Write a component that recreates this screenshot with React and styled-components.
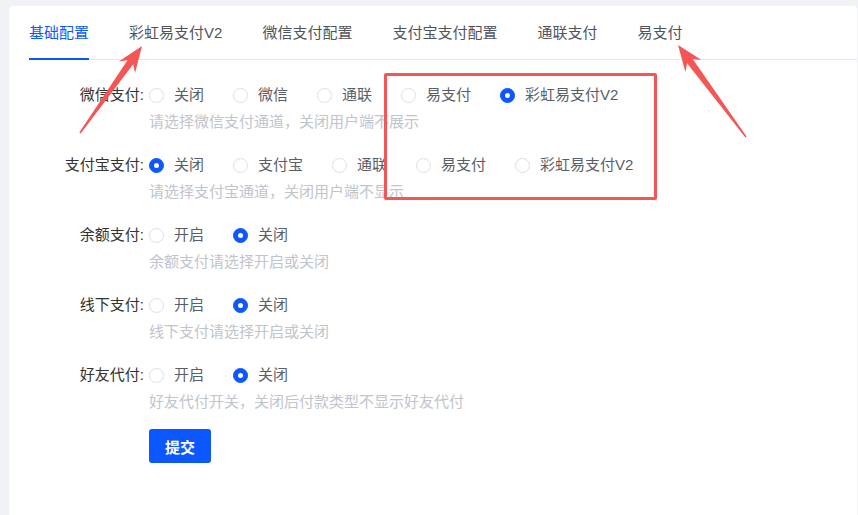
import React from "react";
import styled, { createGlobalStyle } from "styled-components";

const GlobalStyle = createGlobalStyle`
  html, body {
    margin: 0;
    padding: 0;
    background-color: #f0f2f5;
    font-family: "Liberation Sans", "Noto Sans CJK SC", sans-serif;
  }

  * {
    box-sizing: border-box;
  }
`;

const Page = styled.div`
  position: relative;
  min-height: 100vh;
  padding: 6px 1px 0 9px;
`;

const Card = styled.main`
  background-color: #fff;
  border-radius: 4px 4px 0 0;
  min-height: calc(100vh - 6px);
  padding: 16px 0 20px 20px;
`;

const TabNav = styled.nav`
  display: flex;
  gap: 40px;
  border-bottom: 1px solid #e4e7ed;
`;

const Tab = styled.div`
  position: relative;
  font-size: 15px;
  line-height: 22px;
  padding-bottom: 15px;
  color: ${(p) => (p.active ? "#0d57ff" : "#50545c")};

  &::after {
    content: "";
    display: ${(p) => (p.active ? "block" : "none")};
    position: absolute;
    left: 0;
    right: 0;
    bottom: -1px;
    height: 2px;
    background-color: #0d57ff;
  }
`;

const Form = styled.form`
  padding-top: 19px;
`;

const FormItem = styled.div`
  display: flex;
  margin-bottom: 16px;
`;

const Label = styled.label`
  flex: none;
  width: 120px;
  padding-right: 5px;
  text-align: right;
  font-size: 15px;
  line-height: 32px;
  color: #333;
`;

const Control = styled.div`
  display: flex;
  flex-direction: column;
`;

const RadioGroup = styled.div`
  display: flex;
  align-items: center;
  height: 32px;
`;

const Radio = styled.span`
  display: flex;
  align-items: center;
  margin-right: 29px;
  font-size: 15px;
  color: #5a5e66;
`;

const RadioDot = styled.span`
  position: relative;
  flex: none;
  width: 15px;
  height: 15px;
  border-radius: 50%;
  border: 1px solid ${(p) => (p.checked ? "#0d57ff" : "#dcdfe6")};
  background-color: ${(p) => (p.checked ? "#0d57ff" : "#fff")};

  &::after {
    content: "";
    display: ${(p) => (p.checked ? "block" : "none")};
    position: absolute;
    left: 50%;
    top: 50%;
    width: 5px;
    height: 5px;
    margin: -2.5px 0 0 -2.5px;
    border-radius: 50%;
    background-color: #fff;
  }
`;

const RadioText = styled.span`
  padding-left: 10px;
  line-height: 22px;
`;

const Help = styled.div`
  font-size: 15px;
  line-height: 22px;
  color: #c0c4cc;
`;

const SubmitButton = styled.button`
  margin-left: 120px;
  width: 62px;
  height: 34px;
  border: none;
  border-radius: 3px;
  background-color: #0d57ff;
  color: #fff;
  font-family: inherit;
  font-size: 15px;
  font-weight: bold;
`;

const Highlight = styled.div`
  position: absolute;
  left: 384px;
  top: 73px;
  width: 273px;
  height: 127px;
  border: 3px solid #f45656;
  border-radius: 2px;
  pointer-events: none;
`;

const Overlay = styled.svg`
  position: absolute;
  left: 0;
  top: 0;
  pointer-events: none;
`;

const tabs = ["基础配置", "彩虹易支付V2", "微信支付配置", "支付宝支付配置", "通联支付", "易支付"];

const items = [
  {
    label: "微信支付:",
    options: ["关闭", "微信", "通联", "易支付", "彩虹易支付V2"],
    value: 4,
    help: "请选择微信支付通道，关闭用户端不展示",
  },
  {
    label: "支付宝支付:",
    options: ["关闭", "支付宝", "通联", "易支付", "彩虹易支付V2"],
    value: 0,
    help: "请选择支付宝通道，关闭用户端不显示",
  },
  { label: "余额支付:", options: ["开启", "关闭"], value: 1, help: "余额支付请选择开启或关闭" },
  { label: "线下支付:", options: ["开启", "关闭"], value: 1, help: "线下支付请选择开启或关闭" },
  {
    label: "好友代付:",
    options: ["开启", "关闭"],
    value: 1,
    help: "好友代付开关，关闭后付款类型不显示好友代付",
  },
];

// tapered annotation arrow, from tail to tip
function arrowPoints(tip, tail) {
  const dx = tail[0] - tip[0];
  const dy = tail[1] - tip[1];
  const len = Math.hypot(dx, dy);
  const bx = dx / len;
  const by = dy / len;
  const nx = -by;
  const ny = bx;
  const shape = [
    [0, 0],
    [26, 10],
    [20, 3.5],
    [len, 0.8],
    [len, -0.8],
    [20, -3.5],
    [26, -10],
  ];
  return shape
    .map(([a, p]) => `${(tip[0] + a * bx + p * nx).toFixed(1)},${(tip[1] + a * by + p * ny).toFixed(1)}`)
    .join(" ");
}

function App() {
  return (
    <Page>
      <GlobalStyle />
      <Card>
        <TabNav>
          {tabs.map((t, i) => (
            <Tab key={t} active={i === 0}>
              {t}
            </Tab>
          ))}
        </TabNav>
        <Form onSubmit={(e) => e.preventDefault()}>
          {items.map((item) => (
            <FormItem key={item.label}>
              <Label>{item.label}</Label>
              <Control>
                <RadioGroup>
                  {item.options.map((o, i) => (
                    <Radio key={o}>
                      <RadioDot checked={i === item.value} />
                      <RadioText>{o}</RadioText>
                    </Radio>
                  ))}
                </RadioGroup>
                <Help>{item.help}</Help>
              </Control>
            </FormItem>
          ))}
          <SubmitButton type="submit">提交</SubmitButton>
        </Form>
      </Card>
      <Highlight />
      <Overlay width="858" height="515" viewBox="0 0 858 515">
        <polygon points={arrowPoints([142, 46], [80, 133])} fill="#f45656" />
        <polygon points={arrowPoints([678, 45], [746, 137])} fill="#f45656" />
      </Overlay>
    </Page>
  );
}

export default App;
